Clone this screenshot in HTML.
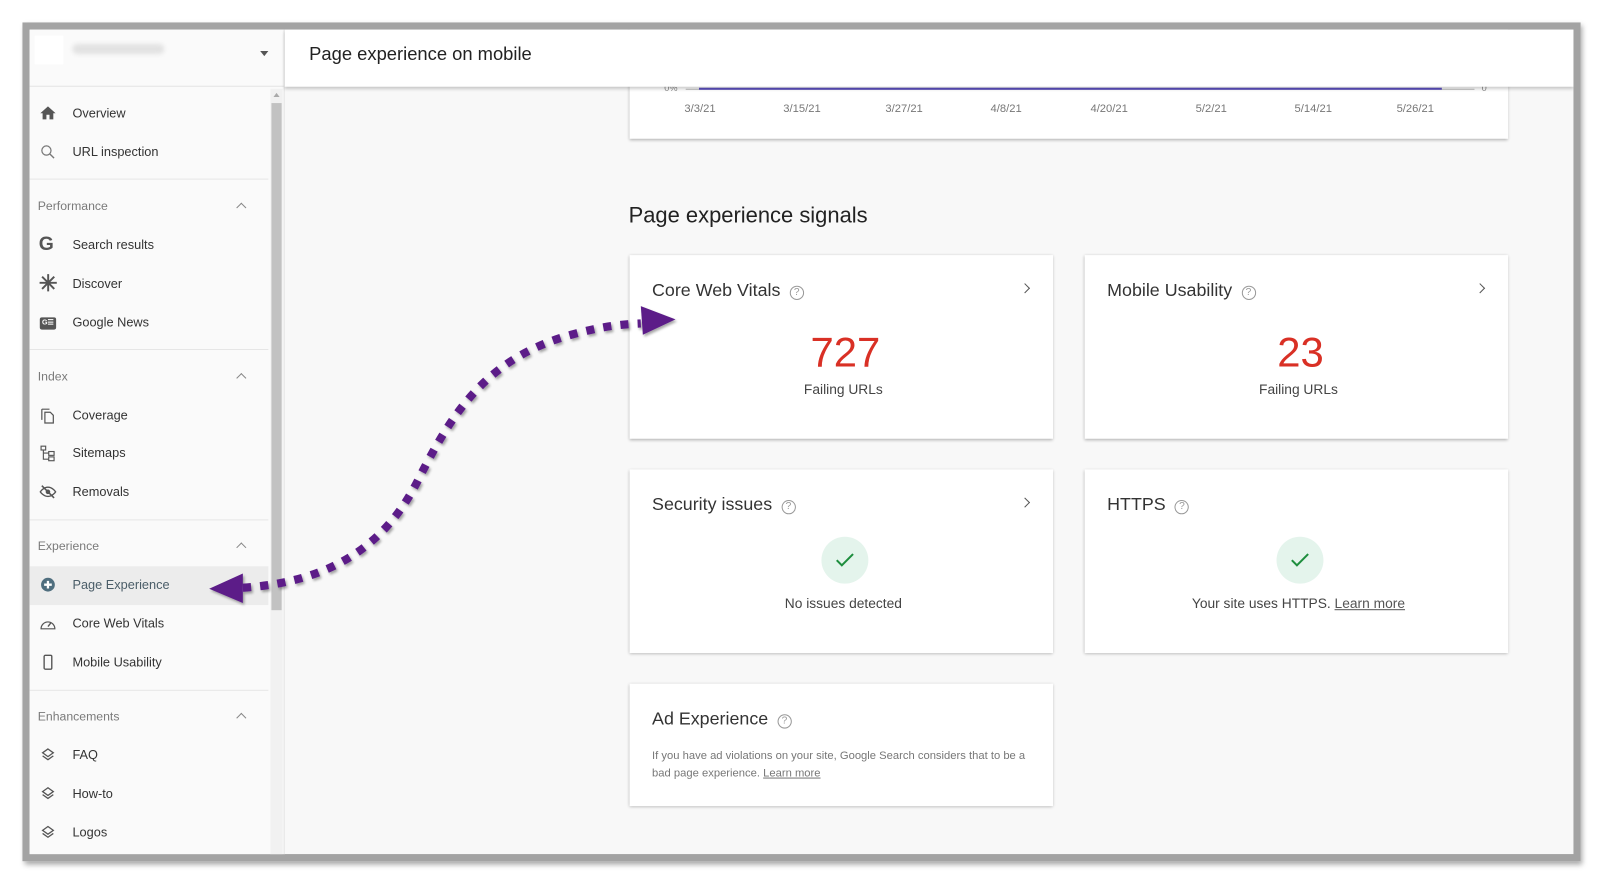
<!DOCTYPE html>
<html><head><meta charset="utf-8">
<style>
*{box-sizing:border-box;margin:0;padding:0}
html,body{width:1600px;height:874px;overflow:hidden;background:#fff;font-family:"Liberation Sans",Arial,sans-serif}
#w{position:absolute;left:0;top:0;width:1568px;height:857px;transform:scale(1.0204);transform-origin:0 0}
.a{position:absolute}
#frame{left:22px;top:22px;width:1527px;height:822px;border:7px solid #a3a3a3;box-shadow:2px 3px 5px rgba(0,0,0,.35);background:#f8f8f8;overflow:hidden}
#side{left:0;top:0;width:250px;height:815px;background:#fafafa;border-right:1px solid #e3e3e3}
.it{position:absolute;left:42px;font-size:12.5px;color:#333;line-height:16px}
.hd{position:absolute;left:8px;font-size:12px;color:#7a7a7a;line-height:16px}
.dv{position:absolute;left:0;width:234px;height:1px;background:#e6e6e6}
.ch{position:absolute;left:204px;width:7px;height:7px;border-left:1.3px solid #888;border-top:1.3px solid #888;transform:rotate(45deg)}
.ic{position:absolute;left:9px;width:18px;height:18px}
.card{position:absolute;background:#fff;box-shadow:0 1px 3px rgba(0,0,0,.3);width:415px}
.ct{position:absolute;left:22px;top:24px;font-size:17.5px;color:#333;white-space:nowrap}
.q{display:inline-block;width:14px;height:14px;border:1.3px solid #999;border-radius:50%;font-size:10px;line-height:12px;text-align:center;color:#999;vertical-align:1px;margin-left:9px}
.chev{position:absolute;left:384px;top:29px;width:7px;height:7px;border-right:1.5px solid #555;border-top:1.5px solid #555;transform:rotate(45deg)}
.num{position:absolute;left:4px;width:100%;text-align:center;top:72px;font-size:41px;color:#d93025}
.sub{position:absolute;left:2px;width:100%;text-align:center;font-size:13.5px;color:#444}
.ok{position:absolute;left:188px;top:66px;width:46px;height:46px;border-radius:50%;background:#e4f4ec}
.dt{position:absolute;top:92px;font-size:11px;color:#777;transform:translateX(-50%)}
</style></head><body>
<div id="w">
<div id="frame" class="a">
 <div id="side" class="a">
  <div class="a" style="left:5px;top:6px;width:28px;height:28px;background:#fff"></div>
  <div class="a" style="left:42px;top:14px;width:90px;height:10px;background:#e2e2e2;border-radius:5px;filter:blur(2px)"></div>
  <div class="a" style="left:226px;top:21px;border-left:4px solid transparent;border-right:4px solid transparent;border-top:5px solid #555"></div>
  <div class="a" style="left:0;top:55px;width:250px;height:1px;background:#e3e3e3"></div>
  <div class="a" style="left:236px;top:58px;width:12px;height:760px;background:#f1f1f1"></div>
  <div class="a" style="left:237px;top:72px;width:10px;height:497px;background:#c2c2c2"></div>
  <div class="a" style="left:239px;top:62px;border-left:3px solid transparent;border-right:3px solid transparent;border-bottom:4px solid #aaa"></div>

  <svg class="ic" style="top:73px" viewBox="0 0 24 24"><path d="M10 20v-6h4v6h5v-8h3L12 3 2 12h3v8z" fill="#555"/></svg>
  <div class="it" style="top:74px">Overview</div>
  <svg class="ic" style="top:111px" viewBox="0 0 24 24"><circle cx="10" cy="10" r="6" fill="none" stroke="#777" stroke-width="1.6"/><path d="M14.5 14.5L20 20" stroke="#777" stroke-width="1.8"/></svg>
  <div class="it" style="top:112px">URL inspection</div>
  <div class="dv" style="top:146px"></div>
  <div class="hd" style="top:165px">Performance</div><div class="ch" style="top:171px"></div>
  <div class="a" style="left:9px;top:201px;font-size:19px;font-weight:bold;color:#555;line-height:20px">G</div>
  <div class="it" style="top:203px">Search results</div>
  <div class="a" style="left:9px;top:239px;font-size:22px;font-weight:bold;color:#555;line-height:20px">✳</div>
  <div class="it" style="top:241px">Discover</div>
  <div class="a" style="left:10px;top:282px;width:16px;height:12px;background:#555;border-radius:2px;color:#fff;font-size:7px;line-height:12px;text-align:center;font-weight:bold">G☰</div>
  <div class="it" style="top:279px">Google News</div>
  <div class="dv" style="top:313px"></div>
  <div class="hd" style="top:332px">Index</div><div class="ch" style="top:338px"></div>
  <svg class="ic" style="top:369px" viewBox="0 0 24 24"><path d="M4 4v14M4 4h10M8 8h7l4 4v10H8z" fill="none" stroke="#555" stroke-width="1.6"/></svg>
  <div class="it" style="top:370px">Coverage</div>
  <svg class="ic" style="top:406px" viewBox="0 0 24 24"><rect x="3" y="3" width="6" height="5" fill="none" stroke="#555" stroke-width="1.5"/><rect x="13" y="10" width="7" height="5" fill="none" stroke="#555" stroke-width="1.5"/><rect x="13" y="17" width="7" height="5" fill="none" stroke="#555" stroke-width="1.5"/><path d="M6 8v12h7M6 12h7" fill="none" stroke="#555" stroke-width="1.5"/></svg>
  <div class="it" style="top:407px">Sitemaps</div>
  <svg class="ic" style="top:444px" viewBox="0 0 24 24"><path d="M2 12s4-6 10-6 10 6 10 6-4 6-10 6S2 12 2 12z" fill="none" stroke="#555" stroke-width="1.8"/><circle cx="12" cy="12" r="3" fill="#555"/><path d="M4 4l16 16" stroke="#555" stroke-width="2"/></svg>
  <div class="it" style="top:445px">Removals</div>
  <div class="dv" style="top:480px"></div>
  <div class="hd" style="top:498px">Experience</div><div class="ch" style="top:504px"></div>
  <div class="a" style="left:0;top:526px;width:234px;height:38px;background:#ececec"></div>
  <svg class="ic" style="top:535px" viewBox="0 0 24 24"><circle cx="12" cy="12" r="9" fill="#4f6e7e"/><path d="M12 7v10M7 12h10" stroke="#fff" stroke-width="3"/></svg>
  <div class="it" style="top:536px;color:#4a5d68">Page Experience</div>
  <svg class="ic" style="top:573px" viewBox="0 0 24 24"><path d="M3 19a9 9 0 1 1 18 0z" fill="none" stroke="#555" stroke-width="1.6"/><path d="M12 16l4-5" stroke="#555" stroke-width="1.8"/></svg>
  <div class="it" style="top:574px">Core Web Vitals</div>
  <svg class="ic" style="top:611px" viewBox="0 0 24 24"><rect x="7" y="3" width="10" height="18" rx="1.5" fill="none" stroke="#555" stroke-width="1.8"/></svg>
  <div class="it" style="top:612px">Mobile Usability</div>
  <div class="dv" style="top:647px"></div>
  <div class="hd" style="top:665px">Enhancements</div><div class="ch" style="top:671px"></div>
  <svg class="ic" style="top:702px" viewBox="0 0 24 24"><path d="M12 4l7 5-7 5-7-5z M5 13l7 5 7-5" fill="none" stroke="#555" stroke-width="1.7"/></svg>
  <div class="it" style="top:703px">FAQ</div>
  <svg class="ic" style="top:740px" viewBox="0 0 24 24"><path d="M12 4l7 5-7 5-7-5z M5 13l7 5 7-5" fill="none" stroke="#555" stroke-width="1.7"/></svg>
  <div class="it" style="top:741px">How-to</div>
  <svg class="ic" style="top:778px" viewBox="0 0 24 24"><path d="M12 4l7 5-7 5-7-5z M5 13l7 5 7-5" fill="none" stroke="#555" stroke-width="1.7"/></svg>
  <div class="it" style="top:779px">Logos</div>
 </div>

 <div class="card" style="left:588px;top:-20px;width:861px;height:127px">
  <div class="a" style="left:34px;top:72px;font-size:9px;color:#888">0%</div>
  <div class="a" style="left:55px;top:78px;width:773px;height:1px;background:#bbb"></div>
  <div class="a" style="left:68px;top:77px;width:728px;height:2px;background:#5b4fbf"></div>
  <div class="a" style="left:835px;top:72px;font-size:9px;color:#888">0</div>
  <div class="dt" style="left:69px">3/3/21</div><div class="dt" style="left:169px">3/15/21</div><div class="dt" style="left:269px">3/27/21</div><div class="dt" style="left:369px">4/8/21</div><div class="dt" style="left:470px">4/20/21</div><div class="dt" style="left:570px">5/2/21</div><div class="dt" style="left:670px">5/14/21</div><div class="dt" style="left:770px">5/26/21</div>
 </div>
 <div class="a" style="left:250px;top:0;width:1263px;height:56px;background:#fff;box-shadow:0 2px 3px rgba(0,0,0,.2)">
  <div class="a" style="left:24px;top:14px;font-size:18px;color:#222">Page experience on mobile</div>
 </div>

 <div class="a" style="left:587px;top:170px;font-size:21.5px;color:#222">Page experience signals</div>

 <div class="card" style="left:588px;top:221px;height:180px">
  <div class="ct">Core Web Vitals<span class="q">?</span></div><div class="chev"></div>
  <div class="num">727</div><div class="sub" style="top:124px">Failing URLs</div>
 </div>
 <div class="card" style="left:1034px;top:221px;height:180px">
  <div class="ct">Mobile Usability<span class="q">?</span></div><div class="chev"></div>
  <div class="num">23</div><div class="sub" style="top:124px">Failing URLs</div>
 </div>
 <div class="card" style="left:588px;top:431px;height:180px">
  <div class="ct">Security issues<span class="q">?</span></div><div class="chev"></div>
  <div class="ok"><svg width="46" height="46" viewBox="0 0 46 46"><path d="M15 23l5 5 11-11" fill="none" stroke="#1e8e3e" stroke-width="2"/></svg></div>
  <div class="sub" style="top:124px">No issues detected</div>
 </div>
 <div class="card" style="left:1034px;top:431px;height:180px">
  <div class="ct">HTTPS<span class="q">?</span></div>
  <div class="ok"><svg width="46" height="46" viewBox="0 0 46 46"><path d="M15 23l5 5 11-11" fill="none" stroke="#1e8e3e" stroke-width="2"/></svg></div>
  <div class="sub" style="top:124px">Your site uses HTTPS. <u style="color:#555">Learn more</u></div>
 </div>
 <div class="card" style="left:588px;top:641px;height:120px">
  <div class="ct">Ad Experience<span class="q">?</span></div>
  <div class="a" style="left:22px;top:63px;font-size:11px;color:#777;line-height:17px;width:385px">If you have ad violations on your site, Google Search considers that to be a bad page experience. <u>Learn more</u></div>
 </div>
</div>

<svg class="a" style="left:0;top:0" width="1568" height="857" viewBox="0 0 1568 857">
 <defs><filter id="sh"><feDropShadow dx="1.5" dy="2" stdDeviation="1.2" flood-color="#000" flood-opacity=".35"/></filter></defs>
 <g filter="url(#sh)" fill="#5b1f88">
  <path d="M238 576 C 330 570, 380 530, 410 470 C 445 400, 480 350, 560 328 C 590 320, 605 318, 628 317" fill="none" stroke="#5b1f88" stroke-width="8" stroke-dasharray="8 9"/>
  <path d="M205 577 L238 562 L238 591 Z"/>
  <path d="M662 313 L628 300 L630 328 Z"/>
 </g>
</svg>
</div>
</body></html>
